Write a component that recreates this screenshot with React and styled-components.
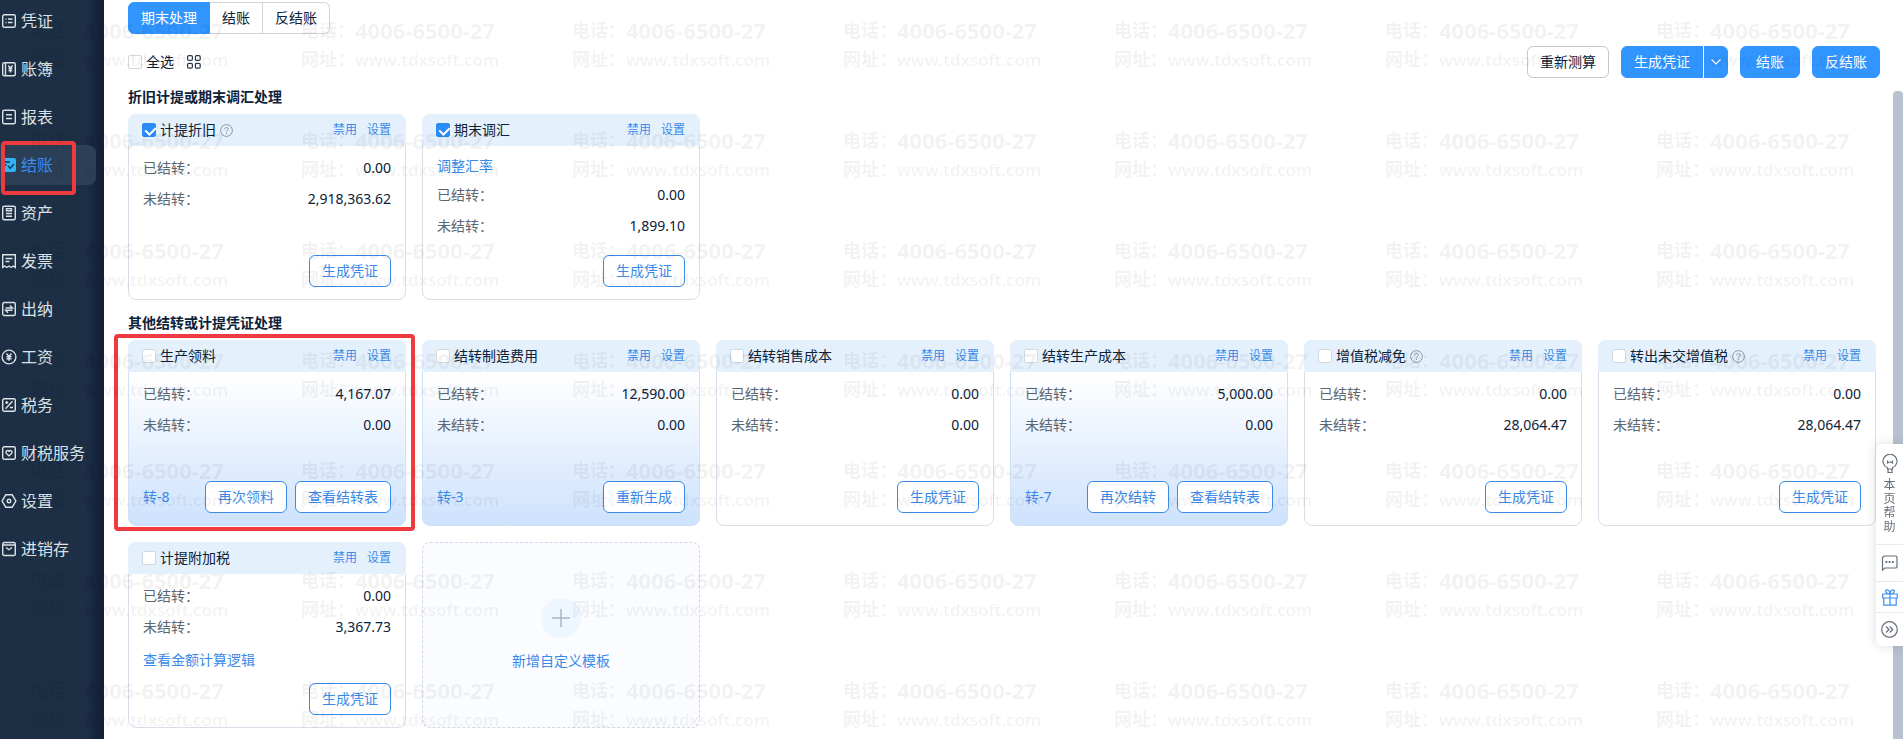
import React from "react";
import styled, { createGlobalStyle, css } from "styled-components";

const menus = [
  { name: "凭证", icon: "voucher" },
  { name: "账簿", icon: "book" },
  { name: "报表", icon: "report" },
  { name: "结账", icon: "close", active: true },
  { name: "资产", icon: "asset" },
  { name: "发票", icon: "invoice" },
  { name: "出纳", icon: "cashier" },
  { name: "工资", icon: "salary" },
  { name: "税务", icon: "tax" },
  { name: "财税服务", icon: "service" },
  { name: "设置", icon: "setting" },
  { name: "进销存", icon: "stock" },
];

const adjustCards = [
  { title: "计提折旧", help: true, checked: true, done: "0.00", todo: "2,918,363.62", actions: ["生成凭证"] },
  { title: "期末调汇", checked: true, topLink: "调整汇率", done: "0.00", todo: "1,899.10", actions: ["生成凭证"] },
];

const otherCards = [
  { title: "生产领料", done: "4,167.07", todo: "0.00", voucher: "转-8", actions: ["再次领料", "查看结转表"], marked: true },
  { title: "结转制造费用", done: "12,590.00", todo: "0.00", voucher: "转-3", actions: ["重新生成"] },
  { title: "结转销售成本", done: "0.00", todo: "0.00", actions: ["生成凭证"] },
  { title: "结转生产成本", done: "5,000.00", todo: "0.00", voucher: "转-7", actions: ["再次结转", "查看结转表"] },
  { title: "增值税减免", help: true, done: "0.00", todo: "28,064.47", actions: ["生成凭证"] },
  { title: "转出未交增值税", help: true, done: "0.00", todo: "28,064.47", actions: ["生成凭证"] },
  { title: "计提附加税", done: "0.00", todo: "3,367.73", bottomLink: "查看金额计算逻辑", actions: ["生成凭证"] },
];

const menuShapes = {
  voucher: (
    <>
      <rect x="0.7" y="0.7" width="12.600" height="12.600" rx="1.500" />
      <path d="M3.500 5h1M6 5h4.500M3.500 8.500h1M6 8.500h4.500" />
    </>
  ),
  book: (
    <>
      <rect x="0.7" y="0.7" width="12.600" height="13" rx="1.500" />
      <path d="M3.500 1v12M6.200 3.500l2.200 2.500 2.200-2.500M8.400 6v4.500M6.500 6.500h3.800M6.500 8.500h3.800" />
    </>
  ),
  report: (
    <>
      <rect x="0.7" y="0.2" width="12.600" height="13.600" rx="1.500" />
      <path d="M4 4.800h6M4 8.500h6" />
    </>
  ),
  asset: (
    <>
      <rect x="0.7" y="0.2" width="12.600" height="13.600" rx="1.500" />
      <path d="M4.500 2.600h5v2.200h-5zM4 7.500h6M4 10.200h6" />
    </>
  ),
  invoice: (
    <>
      <path d="M.7 13.500V.7h12.600v12.800l-2.100-1.500L9.100 13.500 7 12l-2.100 1.500L2.800 12z" />
      <path d="M3.500 4.500h7M3.500 7.500h4" />
    </>
  ),
  cashier: (
    <>
      <rect x="0.7" y="0.5" width="12.600" height="13" rx="1.500" />
      <path d="M3.500 6h7L8 3.500M10.500 8.300h-7L6 10.800" />
    </>
  ),
  salary: (
    <>
      <circle cx="7" cy="7" r="6.900" />
      <path d="M4.500 3.500L7 6.500l2.500-3M7 6.500v4.300M4.500 6.800h5M4.500 8.800h5" />
    </>
  ),
  tax: (
    <>
      <rect x="0.7" y="0.7" width="12.600" height="12.600" rx="1.500" />
      <path d="M10.500 3.200l-7 7.500M3.200 4.600h3M4.700 3.100v3M7.800 9.500h3.200" />
    </>
  ),
  service: (
    <>
      <rect x="0.7" y="0.7" width="12.600" height="12.600" rx="1.500" />
      <path d="M7 9.800C4.800 8.400 3.900 7.300 3.900 6.100 3.900 4.500 6 4 7 5.200 8 4 10.100 4.500 10.100 6.100c0 1.200-.9 2.300-3.100 3.700z" />
    </>
  ),
  setting: (
    <>
      <path d="M3.800.8h6.400L13.900 7l-3.700 6.200H3.800L.1 7z" />
      <circle cx="7" cy="7" r="1.800" />
    </>
  ),
  stock: (
    <>
      <rect x="0.7" y="0.5" width="12.600" height="13" rx="1.500" />
      <path d="M.7 3h12.600M4 5.500l3 2.200 3-2.200" />
    </>
  ),
};

const MenuIcon = ({ name }) => {
  if (name === "close") {
    return (
      <svg width="14" height="14" viewBox="0 0 14 14" fill="none">
        <rect width="14" height="14" rx="2" fill="#2fb4f5" />
        <path d="M3 4h5M3 7h1.500M6 8l2.200 2.200L12 6" stroke="#17304a" strokeWidth="1.300" />
      </svg>
    );
  }
  return (
    <svg width="14" height="14" viewBox="0 0 14 14" fill="none" stroke="currentColor" strokeWidth="1.400" overflow="visible">
      {menuShapes[name]}
    </svg>
  );
};

const HelpIcon = () => (
  <svg width="13" height="13" viewBox="0 0 13 13" fill="none" stroke="#8c98a6" strokeWidth="1">
    <circle cx="6.500" cy="6.500" r="5.900" />
    <path d="M4.700 5.300c0-2.400 3.700-2.300 3.700-.2 0 1.300-1.900 1.300-1.900 2.700M6.500 8.900v1.100" />
  </svg>
);

const GridIcon = () => (
  <svg width="14" height="14" viewBox="0 0 14 14" fill="none" stroke="#2c3a4a" strokeWidth="1.200">
    <rect x="0.600" y="0.600" width="4.800" height="4.800" rx="1.200" />
    <rect x="8.400" y="0.600" width="4.800" height="4.800" rx="1.200" />
    <rect x="0.600" y="8.400" width="4.800" height="4.800" rx="1.200" />
    <rect x="8.400" y="8.400" width="4.800" height="4.800" rx="1.200" />
  </svg>
);

const ProcessCard = ({ card }) => (
  <Card $settled={Boolean(card.voucher)}>
    <CardHeader>
      <CheckLabel>
        <Checkbox type="checkbox" defaultChecked={card.checked} />
        {card.title}
      </CheckLabel>
      {card.help && <HelpIcon />}
      <HeaderLinks>
        <a href="#disable">禁用</a>
        <a href="#setting">设置</a>
      </HeaderLinks>
    </CardHeader>
    <CardBody>
      {card.topLink && <TextLink href="#rate">{card.topLink}</TextLink>}
      <AmountRow>
        <span>已结转：</span>
        <Amount>{card.done}</Amount>
      </AmountRow>
      <AmountRow>
        <span>未结转：</span>
        <Amount>{card.todo}</Amount>
      </AmountRow>
      {card.bottomLink && <TextLink href="#logic" $below>{card.bottomLink}</TextLink>}
    </CardBody>
    <CardFooter>
      {card.voucher && <VoucherLink href="#voucher">{card.voucher}</VoucherLink>}
      {card.actions.map((action) => (
        <OutlineButton key={action}>{action}</OutlineButton>
      ))}
    </CardFooter>
    {card.marked && <CardMark />}
  </Card>
);

const App = () => (
  <>
    <GlobalStyle />
    <Page>
      <Sidebar>
        {menus.map((menu) => (
          <MenuItem key={menu.name} href="#menu" $active={menu.active}>
            <MenuIcon name={menu.icon} />
            {menu.name}
            {menu.active && <MenuMark />}
          </MenuItem>
        ))}
      </Sidebar>

      <Main>
        <Tabs>
          <Tab $active>期末处理</Tab>
          <Tab>结账</Tab>
          <Tab>反结账</Tab>
        </Tabs>

        <Toolbar>
          <CheckLabel>
            <Checkbox type="checkbox" />
            全选
          </CheckLabel>
          <GridIcon />
          <ToolbarButtons>
            <Button>重新测算</Button>
            <SplitButton>
              <Button $primary>生成凭证</Button>
              <ArrowButton $primary aria-label="更多">
                <svg width="10" height="6" viewBox="0 0 10 6" fill="none" stroke="#fff" strokeWidth="1.200">
                  <path d="M.5.5L5 5 9.500.5" />
                </svg>
              </ArrowButton>
            </SplitButton>
            <Button $primary $wide>结账</Button>
            <Button $primary>反结账</Button>
          </ToolbarButtons>
        </Toolbar>

        <SectionTitle>折旧计提或期末调汇处理</SectionTitle>
        <CardGrid>
          {adjustCards.map((card) => (
            <ProcessCard key={card.title} card={card} />
          ))}
        </CardGrid>

        <SectionTitle>其他结转或计提凭证处理</SectionTitle>
        <CardGrid>
          {otherCards.map((card) => (
            <ProcessCard key={card.title} card={card} />
          ))}
          <AddCard>
            <AddCircle>
              <svg width="18" height="18" viewBox="0 0 18 18" stroke="#a9b4c4" strokeWidth="1.500">
                <path d="M9 0v18M0 9h18" />
              </svg>
            </AddCircle>
            新增自定义模板
          </AddCard>
        </CardGrid>
      </Main>
    </Page>

    <ScrollThumb />
    <Watermark aria-hidden="true">
      {Array.from({ length: 49 }, (_, i) => (
        <Mark key={i}>
          <span>电话：</span>
          <Phone>4006-6500-27</Phone>
          <span>网址：</span>
          <Site>www.tdxsoft.com</Site>
        </Mark>
      ))}
    </Watermark>

    <Dock>
      <DockButton $size={100}>
        <svg width="16" height="20" viewBox="0 0 16 20" fill="none" stroke="currentColor" strokeWidth="1.200">
          <path d="M5.500 15v-1.200a7 7 0 1 1 5 0V15zM6 15v3.500h4V15M5.500 6.500v2.500l2-1h1l2 1V6.500" />
        </svg>
        <DockText>本页帮助</DockText>
      </DockButton>
      <DockButton $size={37} aria-label="消息">
        <svg width="17" height="16" viewBox="0 0 17 16" fill="none" stroke="currentColor" strokeWidth="1.200">
          <path d="M1.500 15V2.500L3 1h12l1 1v10l-1 1H4z" />
          <path d="M4.500 7h1.800M7.700 7h1.800M10.900 7h1.800" strokeWidth="1.800" />
        </svg>
      </DockButton>
      <DockButton $size={31} $blue aria-label="礼物">
        <svg width="16" height="17" viewBox="0 0 16 17" fill="none" stroke="currentColor" strokeWidth="1.200">
          <path d="M.7 5h14.600v4H.7zM1.800 9h12.400v7.200H1.800zM8 5v11M8 5C3.500 5 2.500 1 5 .8 7 .7 8 3 8 5zM8 5c4.500 0 5.500-4 3-4.200C9 .7 8 3 8 5z" />
        </svg>
      </DockButton>
      <DockButton $size={34} aria-label="收起">
        <svg width="17" height="17" viewBox="0 0 17 17" fill="none" stroke="currentColor" strokeWidth="1.200">
          <circle cx="8.500" cy="8.500" r="7.800" />
          <path d="M5 5.500l3 3-3 3M8.700 5.500l3 3-3 3" />
        </svg>
      </DockButton>
    </Dock>
  </>
);

export default App;

const GlobalStyle = createGlobalStyle`
  * {
    box-sizing: border-box;
  }

  body {
    margin: 0;
    background: #fff;
    color: #0c2238;
    font-family: "Noto Sans", "Noto Sans CJK SC", sans-serif;
    font-size: 14px;
    line-height: 22px;
  }

  button {
    margin: 0;
    font: inherit;
    cursor: pointer;
  }

  a {
    color: #3a8ae8;
    text-decoration: none;
  }

  svg {
    flex: none;
  }
`;

const redBox = css`
  position: absolute;
  border: 4px solid #ee3b3f;
  border-radius: 4px;
  pointer-events: none;
`;

const Page = styled.div`
  display: flex;
  min-height: 100vh;
`;

const Sidebar = styled.nav`
  display: flex;
  flex: none;
  flex-direction: column;
  gap: 8px;
  width: 104px;
  padding: 1px 8px 0 0;
  background: linear-gradient(90deg, #1c2f45 82%, #15203b 96%);
`;

const MenuItem = styled.a`
  position: relative;
  display: flex;
  align-items: center;
  gap: 5px;
  height: 40px;
  padding-left: 2px;
  border-radius: 0 8px 8px 0;
  background: ${({ $active }) => ($active ? "#2b3f56" : "transparent")};
  color: ${({ $active }) => ($active ? "#3b8ff3" : "#dce1e6")};
  font-size: 16px;
  white-space: nowrap;
`;

const MenuMark = styled.span`
  ${redBox}
  top: -4px;
  left: 1px;
  width: 75px;
  height: 54px;
`;

const Main = styled.main`
  flex: 1;
  min-width: 0;
  padding: 2px 27px 8px 24px;
`;

const Tabs = styled.div`
  display: flex;
`;

const Tab = styled.button`
  height: 32px;
  padding: 0 12px;
  border: 1px solid ${({ $active }) => ($active ? "#3095ff" : "#d0d5dc")};
  border-left-width: ${({ $active }) => ($active ? "1px" : "0")};
  background: ${({ $active }) => ($active ? "#3095ff" : "#fff")};
  color: ${({ $active }) => ($active ? "#fff" : "#0c2238")};

  &:first-child {
    border-radius: 6px 0 0 6px;
  }

  &:last-child {
    border-radius: 0 6px 6px 0;
  }
`;

const Toolbar = styled.div`
  display: flex;
  align-items: center;
  gap: 13px;
  height: 32px;
  margin: 12px -4px 8px 0;
`;

const ToolbarButtons = styled.div`
  display: flex;
  gap: 12px;
  margin-left: auto;
`;

const CheckLabel = styled.label`
  display: flex;
  align-items: center;
  gap: 4px;
  white-space: nowrap;
`;

const Checkbox = styled.input`
  position: relative;
  width: 14px;
  height: 14px;
  margin: 0;
  appearance: none;
  border: 1px solid #d3d8df;
  border-radius: 2px;
  background: #fff;

  &:checked {
    border-color: #2a8cf5;
    background: #2a8cf5;
  }

  &:checked::after {
    content: "";
    position: absolute;
    top: 1px;
    left: 4px;
    width: 5px;
    height: 8px;
    border: solid #fff;
    border-width: 0 2px 2px 0;
    transform: rotate(45deg);
  }
`;

const Button = styled.button`
  height: 32px;
  padding: 0 ${({ $wide }) => ($wide ? "15px" : "12px")};
  border: 1px solid ${({ $primary }) => ($primary ? "#3095ff" : "#c4c9d0")};
  border-radius: 6px;
  background: ${({ $primary }) => ($primary ? "#3095ff" : "#fff")};
  color: ${({ $primary }) => ($primary ? "#fff" : "#0c2238")};
  white-space: nowrap;
`;

const SplitButton = styled.div`
  display: flex;
  gap: 1px;

  ${Button}:first-child {
    border-radius: 6px 0 0 6px;
  }
`;

const ArrowButton = styled(Button)`
  display: flex;
  align-items: center;
  justify-content: center;
  width: 24px;
  padding: 0;
  border-radius: 0 6px 6px 0;
`;

const SectionTitle = styled.h2`
  margin: 0 0 6px;
  font-size: 14px;
  font-weight: 700;
  line-height: 22px;
`;

const CardGrid = styled.div`
  display: grid;
  grid-template-columns: repeat(auto-fill, minmax(260px, 1fr));
  gap: 16px;

  & + ${SectionTitle} {
    margin-top: 12px;
  }
`;

const Card = styled.section`
  position: relative;
  display: flex;
  flex-direction: column;
  min-height: 186px;
  border: 1px solid ${({ $settled }) => ($settled ? "#d0e0f6" : "#d7deea")};
  border-radius: 8px;
  background: ${({ $settled }) => ($settled ? "linear-gradient(#fff 18%, #cee2fd)" : "#fff")};
`;

const CardHeader = styled.header`
  display: flex;
  align-items: center;
  gap: 4px;
  height: 32px;
  margin: -1px -1px 0;
  padding: 0 15px 0 14px;
  border-radius: 8px 8px 0 0;
  background: #e4f1fd;
`;

const HeaderLinks = styled.div`
  display: flex;
  gap: 10px;
  margin-left: auto;
  font-size: 12px;
`;

const CardBody = styled.div`
  display: flex;
  flex: 1;
  flex-direction: column;
  gap: 9px;
  padding: 11px 14px 0;
`;

const AmountRow = styled.div`
  display: flex;
  justify-content: space-between;
  color: #5b6673;
`;

const Amount = styled.span`
  color: #0c2238;
`;

const TextLink = styled.a`
  align-self: flex-start;
  margin-top: ${({ $below }) => ($below ? "4px" : "0")};
  line-height: 18px;
`;

const CardFooter = styled.footer`
  display: flex;
  align-items: center;
  justify-content: flex-end;
  gap: 8px;
  padding: 0 14px 12px;
`;

const VoucherLink = styled.a`
  margin-right: auto;
`;

const OutlineButton = styled(Button)`
  border-color: #3a8ae8;
  color: #3a8ae8;
`;

const CardMark = styled.div`
  ${redBox}
  inset: -7px -10px -6px -15px;
`;

const AddCard = styled.button`
  display: flex;
  flex-direction: column;
  align-items: center;
  justify-content: center;
  gap: 12px;
  min-height: 186px;
  padding: 0;
  border: 1px dashed #d0d8e6;
  border-radius: 8px;
  background: #fafcff;
  color: #3a8ae8;
`;

const AddCircle = styled.span`
  display: flex;
  align-items: center;
  justify-content: center;
  width: 40px;
  height: 40px;
  border-radius: 50%;
  background: #eef6ff;
`;

const ScrollThumb = styled.div`
  position: fixed;
  top: 91px;
  right: 0;
  bottom: 0;
  width: 10px;
  border-radius: 4px 4px 0 0;
  background: #b8c1ce;
`;

const Watermark = styled.div`
  position: fixed;
  inset: 0;
  display: grid;
  grid-template-columns: repeat(7, 271px);
  grid-auto-rows: 110px;
  padding: 16px 0 0 30px;
  overflow: hidden;
  color: rgba(0, 0, 0, 0.05);
  font-size: 18px;
  font-weight: 600;
  pointer-events: none;
`;

const Mark = styled.div`
  display: grid;
  grid-template-columns: 54px auto;
  grid-auto-rows: 29px;
  align-content: start;
  align-items: center;
  justify-content: start;
  line-height: 29px;
  white-space: nowrap;
`;

const Phone = styled.span`
  font-family: "Open Sans", sans-serif;
  font-size: 22px;
  font-weight: 700;
`;

const Site = styled.span`
  font-family: "Open Sans", sans-serif;
  font-size: 17px;
`;

const Dock = styled.aside`
  position: fixed;
  top: 444px;
  right: 0;
  width: 27px;
  border-radius: 6px 0 0 6px;
  background: #fff;
  box-shadow: 0 0 12px rgba(0, 0, 0, 0.14);
`;

const DockButton = styled.button`
  display: flex;
  flex-direction: column;
  align-items: center;
  justify-content: center;
  gap: 4px;
  width: 100%;
  height: ${({ $size }) => $size}px;
  padding: 0;
  border: 0;
  background: none;
  color: ${({ $blue }) => ($blue ? "#3a8ff0" : "#66707c")};

  & + & {
    border-top: 1px solid #e6e9ee;
  }
`;

const DockText = styled.span`
  width: 12px;
  font-size: 12px;
  line-height: 14px;
`;
